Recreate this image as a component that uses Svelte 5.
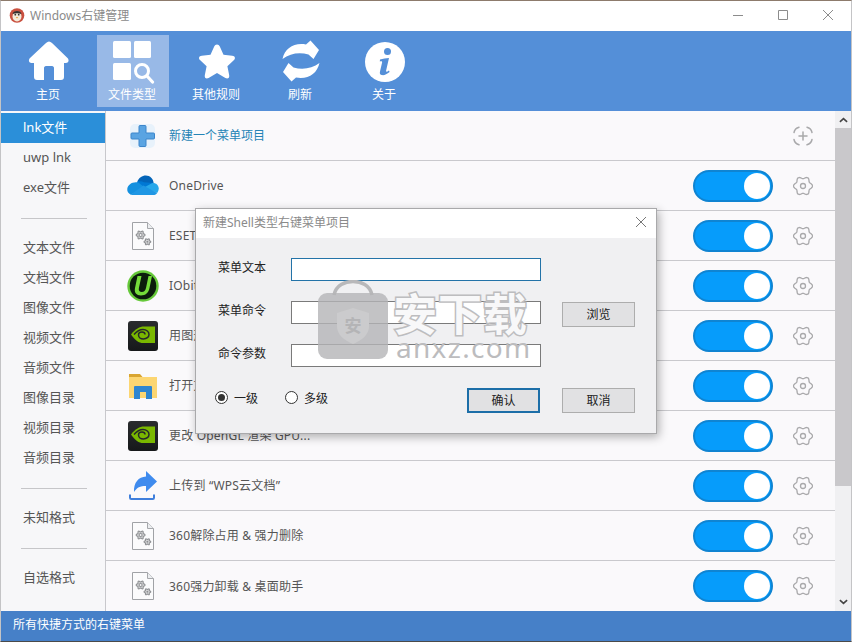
<script>
  const top = [
    { label: '主页', icon: 'home' },
    { label: '文件类型', icon: 'types', active: true },
    { label: '其他规则', icon: 'star' },
    { label: '刷新', icon: 'refresh' },
    { label: '关于', icon: 'info' }
  ];
  const groups = [
    ['lnk文件', 'uwp lnk', 'exe文件'],
    ['文本文件', '文档文件', '图像文件', '视频文件', '音频文件', '图像目录', '视频目录', '音频目录'],
    ['未知格式'],
    ['自选格式']
  ];
  const rows = [
    { text: 'OneDrive', icon: 'onedrive' },
    { text: 'ESET Smart Security', icon: 'file' },
    { text: 'IObit Unlocker', icon: 'iobit' },
    { text: '用图形处理器运行', icon: 'nvidia' },
    { text: '打开文件所在的位置', icon: 'folder' },
    { text: '更改 OpenGL 渲染 GPU...', icon: 'nvidia' },
    { text: '上传到 “WPS云文档”', icon: 'upload' },
    { text: '360解除占用 & 强力删除', icon: 'file' },
    { text: '360强力卸载 & 桌面助手', icon: 'file' }
  ];

  // Six-lobed gear outline, flat on top and pointed left and right.
  function flower(cx, cy, r, amp) {
    let d = '';
    for (let i = 0; i < 72; i++) {
      const a = (i / 72) * Math.PI * 2;
      const rad = r + amp * Math.cos(6 * a);
      d += (i ? 'L' : 'M') + (cx + rad * Math.cos(a)).toFixed(2) + ' ' + (cy + rad * Math.sin(a)).toFixed(2);
    }
    return d + 'Z';
  }
  const gearPath = flower(10, 10, 8.4, 1.1);
  const smallGearA = flower(8.6, 13, 3.7, 0.7);
  const smallGearB = flower(15.4, 19.8, 2.8, 0.55);
</script>

{#snippet gear()}
  <svg class="gear" viewBox="0 0 20 20" width="20" height="20" fill="none" stroke="#a9a9ab" stroke-width="1.300">
    <path d={gearPath} stroke-linejoin="round"/>
    <circle cx="10" cy="10" r="2.500"/>
  </svg>
{/snippet}

{#snippet rowIcon(name)}
  {#if name === 'onedrive'}
    <svg viewBox="0 0 34 24" width="32" height="23">
      <path d="M11 8C13 2 21 -1 26 4c1.200 1.200 2 3 2.300 5.300L19 15z" fill="#0364b8"/>
      <path d="M11 8c2.500-.9 5-.6 7 .6l10.300 .7-8 9.700H7z" fill="#0078d4"/>
      <path d="M12 8.800C6 7.500 .8 11 .3 15.500c-.3 3 1 5 3.700 6.200L13 17l6-3z" fill="#1490df"/>
      <path d="M27 9.300c3.500-.4 6.500 2 6.700 5.700.1 2-.7 3.700-1.700 5L18 14z" fill="#28a8ea"/>
      <path d="M4 21.500c1 .5 2 .6 3 .6h22c1.300 0 2.300-.9 3-2L17.500 12z" fill="#1f97e4"/>
    </svg>
  {:else if name === 'file'}
    <svg viewBox="0 0 22 28" width="22" height="28">
      <path d="M.5.5h15l6 6v21H.5z" fill="#fbfbfc" stroke="#a0a2a6"/>
      <path d="M15.500.5v6h6" fill="#eceef0" stroke="#a6a8ac"/>
      <g fill="#d8d9da" stroke="#8f9194" stroke-width="1.100">
        <path d={smallGearA}/>
        <circle cx="8.600" cy="13" r="1.500" fill="#fbfbfc"/>
        <path d={smallGearB}/>
        <circle cx="15.400" cy="19.800" r="1" fill="#8f9194" stroke="none"/>
      </g>
    </svg>
  {:else if name === 'iobit'}
    <svg viewBox="0 0 32 32" width="32" height="32">
      <circle cx="16" cy="16" r="15.700" fill="#66c93a"/>
      <circle cx="16" cy="16" r="13.300" fill="#0b1d0c"/>
      <path d="M10.500 6 8 18c-1 4.700 1.500 7.500 6 7.500s7.500-2.700 8.500-7.500l2.500-12h-3.500L19 18c-.6 2.800-2 4-4.200 4s-3.500-1.200-2.900-4l2.600-12z" fill="#74dc3a"/>
    </svg>
  {:else if name === 'nvidia'}
    <svg viewBox="0 0 30 30" width="30" height="30">
      <defs>
        <linearGradient id="nv" x1="0" y1="0" x2="0" y2="1">
          <stop offset="0" stop-color="#2a2c2e"/>
          <stop offset="1" stop-color="#16181a"/>
        </linearGradient>
      </defs>
      <rect width="30" height="30" rx="3" fill="url(#nv)"/>
      <path d="M3 13.500C7 8 12 5.500 16 5.500h11V22H15c-4 0-8-2.500-12-8.500z" fill="#7ab800"/>
      <path d="M6 13.500c3-3.500 6.500-5 9-5 3.500 0 6 2.500 6 5s-2.500 4.500-5.500 4.500c-3 0-5-1.800-5-4 0-2 1.800-3 3.500-3s3 1 3 2.500" fill="none" stroke="#25282a" stroke-width="1.500"/>
    </svg>
  {:else if name === 'folder'}
    <svg viewBox="0 0 30 26" width="30" height="26">
      <path d="M1 1h11l2.500 3H1z" fill="#d9a531"/>
      <path d="M1 4h28v21H1z" fill="#fcd672"/>
      <path d="M6 26V14a1 1 0 0 1 1-1h16a1 1 0 0 1 1 1v12h-6v-7h-6v7z" fill="#2f86d0"/>
    </svg>
  {:else if name === 'upload'}
    <svg viewBox="0 0 28 32" width="28" height="32">
      <path d="M17 1l11 10.500L17 22v-6c-6 0-9 1.500-12 6C4.500 12.500 9.500 7 17 6.500z" fill="#3f8bee"/>
      <path d="M2 23.500v3.200c0 .7.500 1.300 1.300 1.300h21.500c.7 0 1.200-.6 1.200-1.300v-3.200" transform="translate(-1 1)" fill="none" stroke="#3f7fdc" stroke-width="2"/>
    </svg>
  {/if}
{/snippet}

<div class="window">
  <header class="titlebar">
    <svg class="logo" viewBox="0 0 16 16" width="16" height="16">
      <circle cx="8" cy="8.500" r="7.300" fill="#c9503f"/>
      <ellipse cx="8" cy="9.500" rx="4.500" ry="5" fill="#f4ead9"/>
      <path d="M3.500 7C4 3 12 3 12.500 7 10 6 6 6 3.500 7z" fill="#35302e"/>
      <circle cx="6.300" cy="7.700" r=".9" fill="#333"/>
      <circle cx="9.700" cy="7.700" r=".9" fill="#333"/>
      <path d="M6.800 10h2.400L8 11.500z" fill="#e5a33a"/>
    </svg>
    <span class="apptitle">Windows右键管理</span>
    <div class="wincontrols">
      <svg viewBox="0 0 12 12" width="12" height="12"><path d="M1 6.500h10" stroke="#8c8c8c" fill="none"/></svg>
      <svg viewBox="0 0 12 12" width="12" height="12"><path d="M1.500 1.500h9v9h-9z" stroke="#8c8c8c" fill="none"/></svg>
      <svg viewBox="0 0 12 12" width="12" height="12"><path d="M1 1l10 10M11 1 1 11" stroke="#8c8c8c" fill="none"/></svg>
    </div>
  </header>

  <nav class="toolbar">
    {#each top as t}
      <div class="tool" class:active={t.active}>
        <svg viewBox="0 0 44 44" width="44" height="44" fill="#fff">
          {#if t.icon === 'home'}
            <path d="M22 1.500c1 0 2 .5 3 1.500L40.500 18c2 2 1 5-1.500 5H37v14c0 2-1 3-3 3h-7V28c0-1-.7-2-2-2h-6c-1.300 0-2 1-2 2v12h-7c-2 0-3-1-3-3V23H4.500C2 23 1 20 3 18L19 3c1-1 2-1.500 3-1.500z"/>
          {:else if t.icon === 'types'}
            <rect x="2" y="1" width="18" height="17" rx="1.500"/>
            <rect x="23" y="1" width="17" height="17" rx="1.500"/>
            <rect x="2" y="23" width="18" height="17" rx="1.500"/>
            <circle cx="31" cy="31" r="6.500" fill="none" stroke="#fff" stroke-width="3"/>
            <path d="M36 36l5.500 6" stroke="#fff" stroke-width="3.200" stroke-linecap="round" fill="none"/>
          {:else if t.icon === 'star'}
            <path d="M22 4.500c1.300 0 2.200.8 2.800 2l3.700 8.200 8.700 1.100c3 .4 3.500 2.700 1.800 4.300l-6.600 6.100 1.800 9c.5 2.700-1.500 4-3.800 2.800L22 33l-8.400 5c-2.300 1.200-4.300-.1-3.800-2.800l1.800-9-6.600-6.100c-1.700-1.600-1.200-3.900 1.800-4.300l8.700-1.100 3.700-8.200c.6-1.200 1.500-2 2.800-2z"/>
          {:else if t.icon === 'refresh'}
            <path d="M3.500 19C6 8 15 2.500 27 4.500L31.500 .5 40 10 34.500 19 29.500 14.500C20 12 11 13.500 3.500 19Z"/>
            <path d="M3.500 19C6 8 15 2.500 27 4.500L31.500 .5 40 10 34.500 19 29.500 14.500C20 12 11 13.500 3.500 19Z" transform="rotate(180 22 21)"/>
          {:else}
            <circle cx="22" cy="22" r="20"/>
            <circle cx="24.500" cy="11.500" r="3.500" fill="#548fd8"/>
            <path d="M17 19.500c3-1 6-1.500 9-1.500l-3 13c0 1 .8 1 3-.5l.6 1.500c-3 2.500-5.500 3.500-8 3-2-.5-2-2-1.500-4l2-8.500c.2-1.200-.5-1.500-2.300-1z" fill="#548fd8"/>
          {/if}
        </svg>
        <span>{t.label}</span>
      </div>
    {/each}
  </nav>

  <div class="body">
    <aside class="sidebar">
      {#each groups as g, i}
        {#if i > 0}<div class="sep"></div>{/if}
        {#each g as item}
          <div class="side-item" class:selected={item === 'lnk文件'}>{item}</div>
        {/each}
      {/each}
    </aside>

    <main class="list">
      <div class="rows">
        <div class="row">
          <span class="ic">
            <svg viewBox="0 0 28 26" width="28" height="26">
              <rect x="1" y="1" width="25" height="24" rx="5" fill="#e8f2fb"/>
              <path d="M11 2.500h5a1 1 0 0 1 1 1v6.500h7.500a1 1 0 0 1 1 1v4a1 1 0 0 1-1 1H17v6.500a1 1 0 0 1-1 1h-5a1 1 0 0 1-1-1V16H3a1 1 0 0 1-1-1v-4a1 1 0 0 1 1-1h7V3.500a1 1 0 0 1 1-1z" fill="#5aa4e2" stroke="#3d86cb"/>
            </svg>
          </span>
          <span class="label new">新建一个菜单项目</span>
          <svg class="gear" viewBox="0 0 20 20" width="20" height="20" fill="none" stroke="#a9a9ab" stroke-width="1.500" stroke-linecap="round">
            <path d="M1 6.500C1.500 4 3.500 1.800 6 1.200M14 1.200c2.500.6 4.500 2.800 5 5.300M19 13.500c-.5 2.500-2.500 4.700-5 5.300M6 18.800c-2.500-.6-4.500-2.800-5-5.300"/>
            <path d="M10 6v8M6 10h8"/>
          </svg>
        </div>
        {#each rows as r}
          <div class="row">
            <span class="ic">{@render rowIcon(r.icon)}</span>
            <span class="label">{r.text}</span>
            <span class="switch"><i></i></span>
            {@render gear()}
          </div>
        {/each}
      </div>
      <div class="scrollbar">
        <div class="arrow">
          <svg viewBox="0 0 10 6" width="9" height="6"><path d="M1 5l4-3.500L9 5" fill="none" stroke="#444" stroke-width="1.800"/></svg>
        </div>
        <div class="thumb"></div>
        <div class="arrow down">
          <svg viewBox="0 0 10 6" width="9" height="6"><path d="M1 1l4 3.500L9 1" fill="none" stroke="#444" stroke-width="1.800"/></svg>
        </div>
      </div>
    </main>
  </div>

  <footer class="status">所有快捷方式的右键菜单</footer>

  <div class="dialog">
    <div class="dlg-title">
      <span>新建Shell类型右键菜单项目</span>
      <svg viewBox="0 0 12 12" width="12" height="12"><path d="M1 1l10 10M11 1 1 11" stroke="#777" fill="none"/></svg>
    </div>
    <div class="dlg-body">
      <span class="flabel">菜单文本</span>
      <div class="input focus"></div>
      <span></span>
      <span class="flabel">菜单命令</span>
      <div class="input"></div>
      <div class="btn browse">浏览</div>
      <span class="flabel">命令参数</span>
      <div class="input"></div>
      <span></span>
    </div>
    <div class="dlg-foot">
      <span class="radio on"><i></i></span><span class="rtext">一级</span>
      <span class="radio second"></span><span class="rtext">多级</span>
      <div class="btn default">确认</div>
      <div class="btn">取消</div>
    </div>
  </div>

  <div class="watermark">
    <svg class="bag" viewBox="0 0 70 79" width="70" height="79">
      <path d="M16 15C18 5 27 1.500 35 1.500S52 5 54 15" fill="none" stroke="#b8b8ba" stroke-width="3.500"/>
      <rect x="0" y="13" width="70" height="66" rx="9" fill="#b4b4b6" fill-opacity=".8"/>
      <path d="M35 28l16 5v13c0 9-7 14-16 18-9-4-16-9-16-18V33z" fill="#cbcbcd"/>
      <text x="35" y="52" text-anchor="middle" class="an">安</text>
    </svg>
    <div class="wm-text">
      <div class="cn">安下载</div>
      <div class="en">anxz.com</div>
    </div>
  </div>
</div>

<style>
  :global(body) {
    margin: 0;
    background: #fff;
  }
  .window {
    position: relative;
    width: 852px;
    height: 642px;
    display: flex;
    flex-direction: column;
    overflow: hidden;
    font-family: "Noto Sans", "Noto Sans CJK SC", sans-serif;
    font-size: 12px;
    color: #555;
    border-top: 1px solid #8d7b6c;
    border-bottom: 1px solid #4a4a4a;
    border-left: 1px solid #c4c4c6;
    border-right: 1px solid #c4c4c6;
    box-sizing: border-box;
  }
  .titlebar {
    height: 30px;
    flex: none;
    background: #fff;
    display: flex;
    align-items: center;
    padding-left: 8px;
    padding-bottom: 2px;
    box-sizing: border-box;
  }
  .logo { margin-right: 5px; }
  .apptitle { color: #8a8a8a; font-size: 12px; }
  .wincontrols {
    margin-left: auto;
    display: flex;
    gap: 33px;
    padding-right: 17px;
  }
  .toolbar {
    height: 80px;
    flex: none;
    background: #548fd8;
    display: flex;
    padding-left: 12px;
    gap: 12px;
    box-sizing: border-box;
    padding-top: 4px;
  }
  .tool {
    width: 72px;
    height: 72px;
    display: flex;
    flex-direction: column;
    align-items: center;
    color: #fff;
    box-sizing: border-box;
    padding-top: 5px;
  }
  .tool span { line-height: 16px; margin: 3px 2px 0 0; }
  .tool svg { display: block; }
  .tool.active { background: #98b9e7; }
  .body {
    flex: 1;
    min-height: 0;
    display: flex;
  }
  .sidebar {
    width: 105px;
    flex: none;
    box-sizing: border-box;
    background: #f7f7f9;
    border-right: 1px solid #c8c8cc;
    padding-top: 2px;
    font-size: 13px;
  }
  .side-item {
    height: 30px;
    line-height: 28px;
    padding-left: 22px;
    color: #555;
  }
  .side-item.selected {
    background: #2b8fd9;
    color: #fff;
  }
  .sep {
    height: 1px;
    background: #c6c6c9;
    margin: 15px 18px 14px 20px;
  }
  .list {
    flex: 1;
    min-width: 0;
    display: flex;
    background: #faf9fb;
  }
  .rows {
    flex: 1;
    min-width: 0;
  }
  .row {
    height: 50px;
    box-sizing: border-box;
    border-bottom: 1px solid #c9c9cd;
    display: flex;
    align-items: center;
    color: #555;
  }
  .row:last-child { border-bottom: none; }
  .ic {
    width: 63px;
    display: flex;
    justify-content: center;
    flex: none;
    padding-left: 11px;
    box-sizing: border-box;
  }
  .label {
    letter-spacing: .2px;
    white-space: nowrap;
    margin-right: auto;
    margin-bottom: 1px;
  }
  .label.new { color: #2584b6; letter-spacing: 0; }
  .switch {
    width: 80px;
    height: 32px;
    box-sizing: border-box;
    border-radius: 16px;
    background: #069cfb;
    border: 2px solid #0f84d2;
    display: flex;
    align-items: center;
    justify-content: flex-end;
    padding-right: 1px;
    margin-right: 20px;
  }
  .switch i {
    width: 26px;
    height: 26px;
    border-radius: 50%;
    background: #fff;
  }
  .gear {
    flex: none;
    margin-right: 22px;
  }
  .scrollbar {
    width: 16px;
    flex: none;
    background: #f0f0f2;
    display: flex;
    flex-direction: column;
  }
  .arrow {
    height: 17px;
    display: flex;
    align-items: center;
    justify-content: center;
  }
  .arrow.down {
    margin-top: auto;
    padding-bottom: 1px;
  }
  .thumb {
    height: 358px;
    background: #c9c8cb;
  }
  .status {
    height: 30px;
    flex: none;
    background: #4680c8;
    color: #fff;
    line-height: 28px;
    padding-left: 12px;
  }
  .dialog {
    position: absolute;
    left: 194px;
    top: 207px;
    width: 462px;
    height: 226px;
    box-sizing: border-box;
    border: 1px solid #a9a9ab;
    background: #f0f0f2;
    box-shadow: 2px 3px 9px rgba(0, 0, 0, .3);
    display: flex;
    flex-direction: column;
    color: #222;
  }
  .dlg-title {
    height: 29px;
    flex: none;
    box-sizing: border-box;
    background: #fff;
    display: flex;
    align-items: center;
    justify-content: space-between;
    padding: 0 9px 3px 7px;
    color: #8a8a8a;
  }
  .dlg-body {
    display: grid;
    grid-template-columns: 52px 250px 73px;
    grid-template-rows: repeat(3, 23px);
    column-gap: 21px;
    row-gap: 20px;
    padding: 20px 0 0 22px;
    align-items: center;
  }
  .flabel {
    color: #222;
    line-height: 18px;
    margin-top: -4px;
    white-space: nowrap;
  }
  .input {
    height: 23px;
    box-sizing: border-box;
    background: #fff;
    border: 1px solid #7a7a7a;
  }
  .input.focus { border-color: #2373a8; }
  .btn {
    width: 73px;
    height: 25px;
    box-sizing: border-box;
    background: #e1e1e3;
    border: 1px solid #adadad;
    text-align: center;
    line-height: 24px;
    color: #222;
  }
  .btn.browse {
    align-self: start;
    margin-top: 1px;
  }
  .btn.default {
    border: 2px solid #1c6ea8;
    line-height: 22px;
    margin-left: auto;
    margin-right: 22px;
  }
  .dlg-foot {
    display: flex;
    align-items: center;
    padding: 21px 21px 0 19px;
  }
  .radio {
    width: 13px;
    height: 13px;
    box-sizing: border-box;
    border: 1px solid #333;
    border-radius: 50%;
    background: #fff;
    display: flex;
    align-items: center;
    justify-content: center;
    margin-top: -6px;
  }
  .radio i {
    width: 7px;
    height: 7px;
    background: #333;
    border-radius: 50%;
  }
  .radio.second { margin-left: 27px; }
  .rtext { margin-left: 6px; margin-top: -6px; color: #222; }
  .watermark {
    position: absolute;
    left: 317px;
    top: 279px;
    display: flex;
    gap: 5px;
    pointer-events: none;
  }
  .bag { display: block; }
  .an { font: 700 17px "Noto Sans CJK SC", sans-serif; fill: #b4b4b6; }
  .wm-text { padding-top: 8px; }
  .cn {
    font: 700 44px/48px "Noto Sans CJK SC", sans-serif;
    color: #f8f8f9;
    -webkit-text-stroke: 3px #bdbdbf;
    paint-order: stroke fill;
    letter-spacing: 1px;
    white-space: nowrap;
  }
  .en {
    font: 400 28px/23px "Noto Sans", sans-serif;
    color: #bcbcbe;
    letter-spacing: 1.300px;
    margin-left: 3px;
  }
</style>
